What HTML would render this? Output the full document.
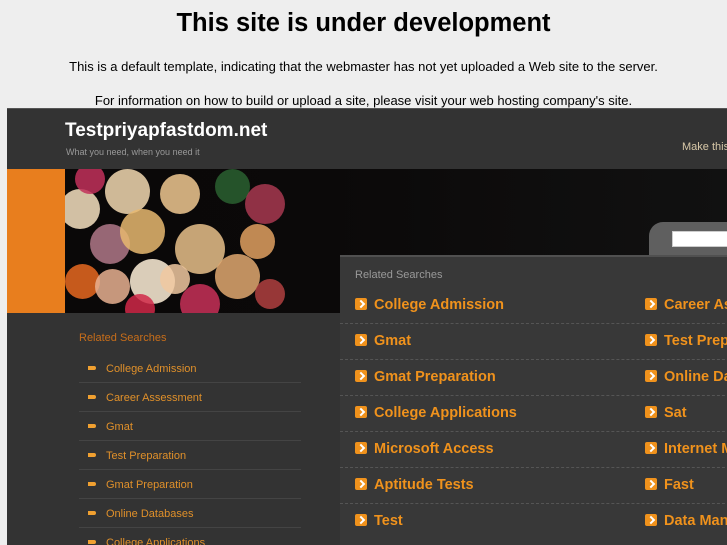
<!DOCTYPE html>
<html style="overflow:hidden"><head><meta charset="utf-8"><style>
*{margin:0;padding:0;box-sizing:border-box}
html,body{width:727px;height:545px;overflow:hidden}
body{background:#eeeeee;font-family:"Liberation Sans",sans-serif;position:relative}
h1{position:absolute;top:9px;left:0;width:727px;text-align:center;font-size:25.5px;font-weight:bold;color:#000}
.p{position:absolute;left:0;width:727px;text-align:center;font-size:13px;color:#000}
#page{position:absolute;left:7px;top:108px;width:720px;height:437px;background:#333;overflow:hidden}
#hdr{position:absolute;left:0;top:0;width:720px;height:61px;background:#333;border-top:1px solid #555}
#title{position:absolute;left:58px;top:11px;font-size:19px;font-weight:bold;color:#fff}
#tag{position:absolute;left:59px;top:38px;font-size:9px;color:#999}
#make{position:absolute;left:675px;top:32px;font-size:11px;color:#d8c8a8;white-space:nowrap}
#orange{position:absolute;left:0;top:61px;width:58px;height:144px;background:#e87e1e}
#img{position:absolute;left:58px;top:61px;width:662px;height:144px;background:linear-gradient(90deg,#0a0808 0,#0b0909 40%,#111 100%);overflow:hidden}
.b{position:absolute;border-radius:50%;opacity:.85}
#tab{position:absolute;left:642px;top:114px;width:90px;height:36px;background:#5f5f5f;border-radius:14px 0 0 0}
#search{position:absolute;left:665px;top:123px;width:60px;height:16px;background:#fff;border:1px solid #ccc}
#right{position:absolute;left:333px;top:147px;width:400px;height:300px;background:#383838;border-top:2px solid #505050}
#rs{position:absolute;left:15px;top:12px;font-size:11px;color:#999}
.r{position:absolute;font-size:14.5px;font-weight:bold;color:#f0921c;white-space:nowrap}
.r i{display:inline-block;width:12px;height:12px;background:#f0921c;border-radius:2px;margin-right:7px;vertical-align:-1px;position:relative}
.r i:after{content:"";position:absolute;left:3px;top:3px;width:4px;height:4px;border-right:2px solid #fff;border-top:2px solid #fff;transform:rotate(45deg)}
.sep{position:absolute;left:0;width:400px;border-top:1px dashed #555}
#lrs{position:absolute;left:72px;top:224px;font-size:11px;color:#c86e1a}
.l{position:absolute;left:72px;width:222px;height:29px;border-bottom:1px solid #444;font-size:11px;color:#e0902a}
.l span{position:absolute;left:27px;top:9px}
.l b{position:absolute;left:9px;top:12px;width:8px;height:4px;background:#f0a030;border-radius:0 3px 3px 0}
</style></head><body>
<h1>This site is under development</h1>
<div class="p" style="top:59px">This is a default template, indicating that the webmaster has not yet uploaded a Web site to the server.</div>
<div class="p" style="top:93px">For information on how to build or upload a site, please visit your web hosting company's site.</div>
<div id="page">
<div id="hdr"><div id="title">Testpriyapfastdom.net</div><div id="tag">What you need, when you need it</div><div id="make">Make this</div></div>
<div id="orange"></div>
<div id="img">
<div class="b" style="left:-5px;top:20px;width:40px;height:40px;background:#f6e0c0"></div>
<div class="b" style="left:10px;top:-5px;width:30px;height:30px;background:#c2305a"></div>
<div class="b" style="left:40px;top:0;width:45px;height:45px;background:#f2d8b0"></div>
<div class="b" style="left:95px;top:5px;width:40px;height:40px;background:#f0c890"></div>
<div class="b" style="left:150px;top:0;width:35px;height:35px;background:#2a6030"></div>
<div class="b" style="left:180px;top:15px;width:40px;height:40px;background:#a83850"></div>
<div class="b" style="left:25px;top:55px;width:40px;height:40px;background:#b07888"></div>
<div class="b" style="left:55px;top:40px;width:45px;height:45px;background:#e8b870"></div>
<div class="b" style="left:65px;top:90px;width:45px;height:45px;background:#fff0d8"></div>
<div class="b" style="left:110px;top:55px;width:50px;height:50px;background:#e8c08a"></div>
<div class="b" style="left:150px;top:85px;width:45px;height:45px;background:#e0a870"></div>
<div class="b" style="left:175px;top:55px;width:35px;height:35px;background:#e0a060"></div>
<div class="b" style="left:0;top:95px;width:35px;height:35px;background:#e86820"></div>
<div class="b" style="left:30px;top:100px;width:35px;height:35px;background:#e8b090"></div>
<div class="b" style="left:60px;top:125px;width:30px;height:30px;background:#d02848"></div>
<div class="b" style="left:115px;top:115px;width:40px;height:40px;background:#c83058"></div>
<div class="b" style="left:95px;top:95px;width:30px;height:30px;background:#f0c8a0"></div>
<div class="b" style="left:190px;top:110px;width:30px;height:30px;background:#b04040"></div>
</div>
<div id="tab"></div><div id="search"></div>
<div id="right"><div id="rs">Related Searches</div>
<div class="r" style="left:15px;top:40px"><i></i>College Admission</div><div class="r" style="left:305px;top:40px"><i></i>Career Assessment</div>
<div class="sep" style="top:66px"></div>
<div class="r" style="left:15px;top:76px"><i></i>Gmat</div><div class="r" style="left:305px;top:76px"><i></i>Test Preparation</div>
<div class="sep" style="top:102px"></div>
<div class="r" style="left:15px;top:112px"><i></i>Gmat Preparation</div><div class="r" style="left:305px;top:112px"><i></i>Online Databases</div>
<div class="sep" style="top:138px"></div>
<div class="r" style="left:15px;top:148px"><i></i>College Applications</div><div class="r" style="left:305px;top:148px"><i></i>Sat</div>
<div class="sep" style="top:174px"></div>
<div class="r" style="left:15px;top:184px"><i></i>Microsoft Access</div><div class="r" style="left:305px;top:184px"><i></i>Internet Marketing</div>
<div class="sep" style="top:210px"></div>
<div class="r" style="left:15px;top:220px"><i></i>Aptitude Tests</div><div class="r" style="left:305px;top:220px"><i></i>Fast</div>
<div class="sep" style="top:246px"></div>
<div class="r" style="left:15px;top:256px"><i></i>Test</div><div class="r" style="left:305px;top:256px"><i></i>Data Management</div>
</div>
<div id="lrs">Related Searches</div>
<div class="l" style="top:246px"><b></b><span>College Admission</span></div>
<div class="l" style="top:275px"><b></b><span>Career Assessment</span></div>
<div class="l" style="top:304px"><b></b><span>Gmat</span></div>
<div class="l" style="top:333px"><b></b><span>Test Preparation</span></div>
<div class="l" style="top:362px"><b></b><span>Gmat Preparation</span></div>
<div class="l" style="top:391px"><b></b><span>Online Databases</span></div>
<div class="l" style="top:420px"><b></b><span>College Applications</span></div>
</div>
</body></html>
